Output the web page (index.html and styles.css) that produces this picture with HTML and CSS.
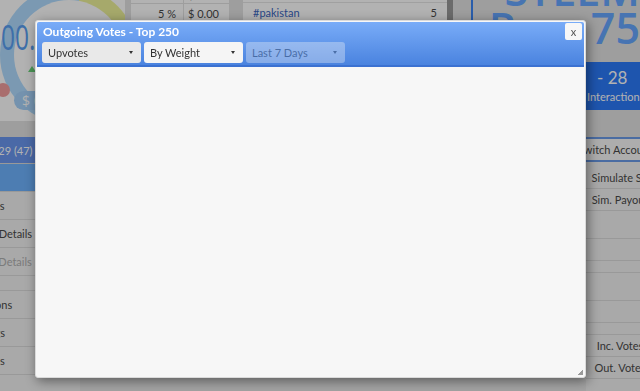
FILE: index.html
```html
<!DOCTYPE html>
<html lang="en">

<head>
    <meta charset="UTF-8">
    <title>Outgoing Votes</title>
    <link rel="stylesheet" href="styles.css">
</head>

<body>
    <div class="page">
        <div class="top">
            <div class="gauge">
                <div class="gauge-ring"><div class="gauge-hole"></div></div>
                <div class="gauge-num">100.00</div>
                <span class="gauge-dot"></span>
                <span class="gauge-up"></span>
                <div class="gauge-usd">$ 0.00</div>
            </div>
            <table class="stats">
                <tr><td>10 %</td><td>$ 0.01</td></tr>
                <tr><td>5 %</td><td>$ 0.00</td></tr>
            </table>
            <div class="tags">
                <div class="tag-row"><span class="tag">#steem</span><span>7</span></div>
                <div class="tag-row"><span class="tag">#pakistan</span><span>5</span></div>
            </div>
            <span class="tags-bar"></span>
            <div class="brand">
                <div class="brand-name">STEEM<br>Rep 75</div>
                <div class="brand-box">
                    <div class="brand-level">- 28</div>
                    <div class="brand-label">Interaction Level</div>
                </div>
            </div>
        </div>

        <div class="main">
            <ul class="side">
                <li class="side-user">Upvotes 29 (47)</li>
                <li class="side-tab"></li>
                <li>Tags</li>
                <li>Account Details</li>
                <li class="is-muted">Witness Details</li>
                <li class="side-gap"></li>
                <li>Actions</li>
                <li>Logs</li>
                <li>Jobs</li>
            </ul>
            <div class="content"></div>
            <ul class="tools">
                <li class="tools-switch">Switch Account</li>
                <li>Simulate SP</li>
                <li>Sim. Payout</li>
                <li class="tools-blank"></li>
                <li></li>
                <li class="tools-thin"></li>
                <li class="tools-blank"></li>
                <li></li>
                <li class="tools-thin"></li>
                <li>Inc. Votes</li>
                <li>Out. Votes</li>
            </ul>
        </div>
    </div>

    <div class="overlay"></div>

    <div class="dialog">
        <div class="dialog-head">
            <div class="dialog-bar">
                <span class="dialog-title">Outgoing Votes - Top 250</span>
                <button class="dialog-close">x</button>
            </div>
            <div class="dialog-filters">
                <div class="select is-active">Upvotes<span class="caret"></span></div>
                <div class="select">By Weight<span class="caret"></span></div>
                <div class="select is-disabled">Last 7 Days<span class="caret"></span></div>
            </div>
        </div>
        <div class="dialog-body"></div>
        <span class="dialog-grip"></span>
    </div>
</body>

</html>
```

FILE: styles.css
```css
* {
    margin: 0;
    padding: 0;
    box-sizing: border-box;
}

body {
    width: 640px;
    height: 391px;
    overflow: hidden;
    position: relative;
    background: #e4e4e4;
    font-family: Lato, "Open Sans", sans-serif;
    font-size: 11px;
    color: #4a4a4a;
}

.page {
    display: flex;
    flex-direction: column;
    height: 391px;
}

/* top strip */
.top {
    display: flex;
    align-items: flex-start;
    height: 137px;
    flex: none;
    background: #e2e2e2;
}

.gauge {
    width: 125px;
    height: 121px;
    flex: none;
    position: relative;
    overflow: hidden;
    background: #fff;
}

.gauge-ring {
    position: absolute;
    left: 0;
    top: -14px;
    width: 138px;
    height: 138px;
    border-radius: 50%;
    background: conic-gradient(#b0dcff 0 10deg, #eef29a 10deg 110deg, #b0dcff 110deg 360deg);
}

.gauge-hole {
    margin: 14px;
    width: 110px;
    height: 110px;
    border-radius: 50%;
    background: #fff;
}

.gauge-num {
    position: absolute;
    left: -13px;
    top: 13px;
    font-family: "Open Sans", sans-serif;
    font-size: 35px;
    line-height: normal;
    color: #5a9ff2;
    transform: scaleX(.7);
    transform-origin: left;
}

.gauge-dot {
    position: absolute;
    left: -4px;
    top: 83px;
    width: 14px;
    height: 14px;
    border-radius: 50%;
    background: #f29e9e;
}

.gauge-up {
    position: absolute;
    left: 28px;
    top: 66px;
    border: 4px solid transparent;
    border-bottom: 6px solid #6bd57a;
    border-top: 0;
}

.gauge-usd {
    position: absolute;
    left: 14px;
    top: 91px;
    padding: 0 8px;
    border-radius: 10px;
    background: #a6d2fa;
    font-family: "Open Sans", sans-serif;
    font-size: 14px;
    line-height: 19px;
    color: #fff;
}

.stats {
    margin: -16px 0 0 5px;
    width: 100px;
    border-collapse: collapse;
    background: #fff;
}

.stats td {
    height: 19px;
    padding: 0 4px;
    border: 1px solid #e2e2e2;
    white-space: nowrap;
}

.stats td:first-child {
    width: 53px;
    text-align: right;
    padding-right: 7px;
}

.tags {
    width: 204px;
    margin: -16px 0 0 13px;
    background: #fff;
}

.tag-row {
    display: flex;
    justify-content: space-between;
    height: 19px;
    line-height: 19px;
    padding: 0 10px;
    border-bottom: 1px solid #e6e6e6;
}

.tag {
    color: #3a66bf;
}

.tags-bar {
    width: 6px;
    height: 40px;
    background: #9a9a9a;
}

.brand {
    flex: 1;
    margin-left: 18px;
    border-left: 2px solid #3c86f5;
    overflow: hidden;
}

.brand-name {
    margin-top: -29px;
    font-family: "Open Sans", sans-serif;
    font-size: 43px;
    font-weight: 600;
    line-height: 38px;
    word-spacing: 12px;
    text-align: right;
    white-space: nowrap;
    color: #66a6ff;
}

.brand-box {
    margin-top: 15px;
    height: 48px;
    padding: 6px 0 0 114px;
    background: #2b7afa;
    color: #fff;
    white-space: nowrap;
}

.brand-level {
    padding-left: 10px;
    font-size: 17px;
    line-height: 20px;
}

.brand-label {
    margin-top: 2px;
    line-height: 14px;
}

/* lower part */
.main {
    flex: 1;
    display: flex;
}

.side {
    list-style: none;
    width: 172px;
    margin-left: -92px;
    flex: none;
    background: #f2f2f2;
}

.side li {
    height: 28px;
    line-height: 28px;
    text-align: center;
    border-bottom: 1px solid #dcdcdc;
    white-space: nowrap;
}

.side .side-user {
    height: 27px;
    line-height: 27px;
    background: #6a97f0;
    color: #fff;
}

.side .side-tab {
    background: #6fb4ff;
}

.side .is-muted {
    color: #b0b0b0;
}

.side .side-gap {
    height: 15px;
}

.content {
    flex: 1;
    background: #eaeaea;
}

.tools {
    list-style: none;
    width: 68px;
    margin-right: -14px;
    flex: none;
    background: #f2f2f2;
}

.tools li {
    height: 22px;
    line-height: 21px;
    text-align: center;
    border-bottom: 1px solid #dcdcdc;
    white-space: nowrap;
}

.tools .tools-switch {
    height: 25px;
    margin-bottom: 5px;
    text-indent: -9px;
    border-top: 2px solid #6a9be8;
    border-bottom: 2px solid #6a9be8;
    background: #f8f8f8;
}

.tools .tools-blank {
    height: 28px;
}

.tools .tools-thin {
    height: 12px;
}

/* modal */
.overlay {
    position: fixed;
    top: 0;
    left: 0;
    right: 0;
    bottom: 0;
    background: rgba(0, 0, 0, .3);
}

.dialog {
    position: absolute;
    left: 35px;
    top: 20px;
    width: 551px;
    height: 358px;
    padding: 1px;
    display: flex;
    flex-direction: column;
    background: #f7f7f7;
    border: 1px solid #dadada;
    border-radius: 3px;
    box-shadow: 2px 3px 12px rgba(0, 0, 0, .45);
}

.dialog-head {
    padding: 0 2px 2px 5px;
    background: linear-gradient(#79acf8, #4a83df);
    border-bottom: 2px solid #3b71d1;
    border-radius: 2px 2px 0 0;
}

.dialog-bar {
    display: flex;
    align-items: center;
    justify-content: space-between;
    height: 19px;
}

.dialog-title {
    padding-left: 1px;
    font-size: 12px;
    font-weight: 700;
    color: #fff;
}

.dialog-close {
    width: 17px;
    height: 17px;
    border: 0;
    border-radius: 2px;
    background: #f7f7f7;
    font-family: Lato, sans-serif;
    font-size: 11px;
    line-height: 15px;
    color: #555;
}

.dialog-filters {
    display: flex;
    gap: 3px;
    margin-top: 1px;
}

.select {
    width: 99px;
    height: 21px;
    padding: 0 8px 0 6px;
    display: flex;
    align-items: center;
    justify-content: space-between;
    border-radius: 3px;
    background: #f5f5f5;
    color: #333;
}

.select.is-active {
    background: #e9e9e9;
}

.select.is-disabled {
    opacity: .35;
}

.caret {
    border-left: 2px solid transparent;
    border-right: 2px solid transparent;
    border-top: 3px solid #333;
}

.dialog-body {
    flex: 1;
}

.dialog-grip {
    position: absolute;
    right: 2px;
    bottom: 2px;
    width: 5px;
    height: 5px;
    background: linear-gradient(135deg, transparent 50%, #9a9a9a 50%);
}
```
